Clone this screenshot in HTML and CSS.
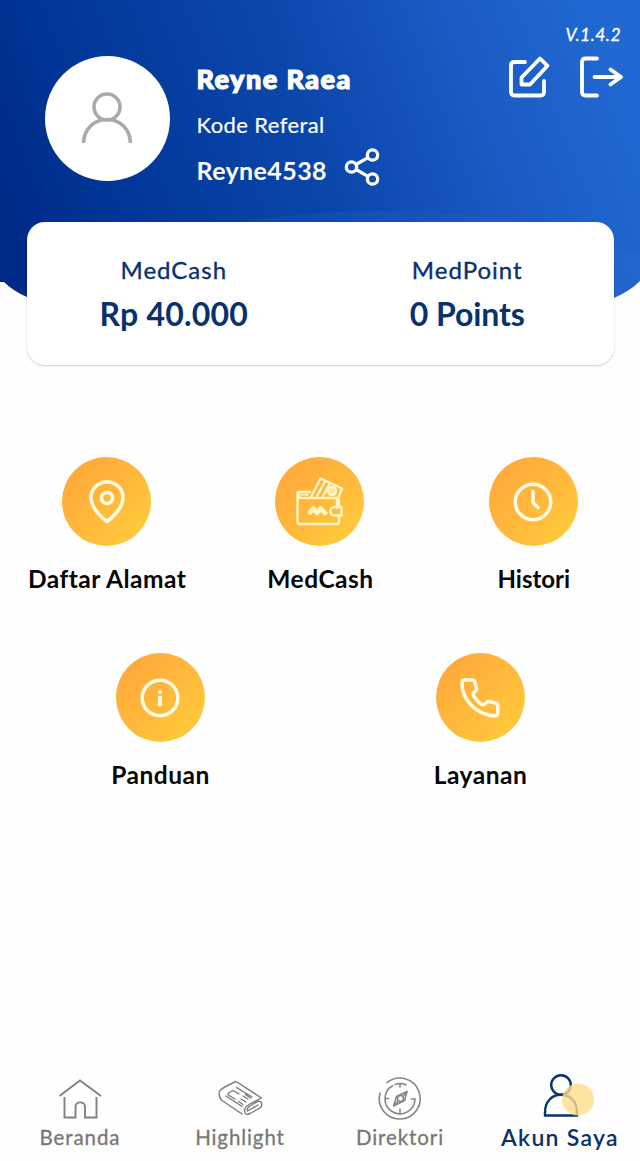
FILE: index.html
```html
<!DOCTYPE html>
<html lang="id">
<head>
<meta charset="utf-8">
<title>Akun Saya</title>
<link rel="stylesheet" href="styles.css">
</head>
<body>
<div class="app">
  <header class="header">
    <svg class="header-bg" viewBox="0 0 640 340" width="640" height="340" aria-hidden="true">
      <defs>
        <linearGradient id="blue" gradientUnits="userSpaceOnUse" x1="20" y1="240" x2="600" y2="20">
          <stop offset="0" stop-color="#002a88"/>
          <stop offset=".15" stop-color="#003596"/>
          <stop offset=".5" stop-color="#0b47ab"/>
          <stop offset=".78" stop-color="#1b5bc3"/>
          <stop offset="1" stop-color="#2168d2"/>
        </linearGradient>
        <clipPath id="shape"><path d="M0 0H640V281Q630 291 614 298Q540 330 320 330Q100 330 27 297Q13 291 4 282H0Z"/></clipPath>
      </defs>
      <g clip-path="url(#shape)">
        <rect width="640" height="340" fill="url(#blue)"/>
        <ellipse cx="380" cy="310" rx="310" ry="99" fill="#3a7be0" opacity=".13"/>
      </g>
    </svg>
    <div class="profile">
      <div class="avatar">
        <svg width="52" height="54" viewBox="0 0 52 54" fill="none" stroke="#a7abad" stroke-width="3.600"><circle cx="26" cy="16" r="13"/><path d="M2.500 52C3 38 13 28.500 26 28.500S49 38 49.500 52"/></svg>
      </div>
      <div class="identity">
        <div class="name">Reyne Raea</div>
        <div class="ref-label">Kode Referal</div>
        <div class="ref-row">
          <span class="ref-code">Reyne4538</span>
          <svg class="share" width="36" height="38" viewBox="0 0 36 38" fill="none" stroke="#fff" stroke-width="3.300"><circle cx="28.500" cy="7" r="5.200"/><circle cx="7.500" cy="19" r="5.200"/><circle cx="28.500" cy="31" r="5.200"/><path d="M12 16.500 24 9.600M12 21.500 24 28.400"/></svg>
        </div>
      </div>
      <div class="tools">
        <div class="version">V.1.4.2</div>
        <div class="actions">
          <svg width="44" height="44" viewBox="0 0 44 44" fill="none" stroke="#fff" stroke-width="3.800" stroke-linecap="round" stroke-linejoin="round"><path d="M18 7H7.500Q4 7 4 10.500V37Q4 40.500 7.500 40.500H33.500Q37 40.500 37 37V26"/><path d="M14.500 22.500 33 3.500 40.500 10.800 23 29.500H14.500Z"/></svg>
          <svg width="44" height="44" viewBox="0 0 44 44" fill="none" stroke="#fff" stroke-width="3.800" stroke-linecap="round" stroke-linejoin="round"><path d="M18 3.500H6.500Q3 3.500 3 7V37Q3 40.500 6.500 40.500H18M15.500 22H42M31.500 14.500 42 22 31.500 29.500"/></svg>
        </div>
      </div>
    </div>
    <section class="balance">
      <div class="balance-item cash"><div class="balance-label">MedCash</div><div class="balance-value">Rp 40.000</div></div>
      <div class="balance-item points"><div class="balance-label">MedPoint</div><div class="balance-value">0 Points</div></div>
    </section>
  </header>

  <main class="menu">
    <div class="menu-row">
      <div class="menu-item">
        <div class="disc"><svg width="50" height="50" viewBox="0 0 50 50" fill="none" stroke="#fffbe6" stroke-width="3.500" stroke-linejoin="round"><path d="M25 44.500C20 41 9 31 9 20.500A16 15.500 0 0 1 41 20.500C41 31 30 41 25 44.500Z"/><circle cx="25" cy="21" r="5.500"/></svg></div>
        <div class="menu-label daftar">Daftar Alamat</div>
      </div>
      <div class="menu-item">
        <div class="disc"><svg width="50" height="54" viewBox="0 0 50 54" fill="none" stroke="#fff5c2" stroke-width="2.400" stroke-linejoin="round" stroke-linecap="round"><path d="M42 33V23H4V17H15M4 17Q2.500 17 2.500 19V47Q2.500 49 4.500 49H42Q44 49 44 47V41M42 23Q44 23 44 25V31"/><path d="M16 22 25.500 3.500 47 13.500 43.500 22M22 21 30 6.500M28 21 34.500 9" /><path stroke-width="1.600" d="M6.500 19.800H13"/><circle cx="37" cy="16" r="4" fill="#ffe49a"/><path d="M39.500 32H46.500V40.500H39.500A4.200 4.200 0 0 1 39.500 32Z"/><path stroke-width="4.600" d="M15 37.500 18.500 33.500 22 38 25.500 33.500 30 38"/></svg></div>
        <div class="menu-label medcash">MedCash</div>
      </div>
      <div class="menu-item">
        <div class="disc"><svg width="50" height="50" viewBox="0 0 50 50" fill="none" stroke="#fffbe6" stroke-width="3.500" stroke-linecap="round" stroke-linejoin="round"><circle cx="25" cy="25" r="17.800"/><path d="M25 14.500V25.500L30 30.500"/></svg></div>
        <div class="menu-label histori">Histori</div>
      </div>
    </div>
    <div class="menu-row">
      <div class="menu-item">
        <div class="disc"><svg width="50" height="50" viewBox="0 0 50 50" fill="none" stroke="#fffbe6" stroke-width="3.500" stroke-linecap="round"><circle cx="25" cy="25" r="17.800"/><path stroke-width="4" d="M25 24.500V31.500"/><circle cx="25" cy="19" r="2.100" fill="#fffbe6" stroke="none"/></svg></div>
        <div class="menu-label panduan">Panduan</div>
      </div>
      <div class="menu-item">
        <div class="disc"><svg width="50" height="50" viewBox="0 0 50 50" fill="none" stroke="#fffbe6" stroke-width="3.500" stroke-linejoin="round"><path d="M9.500 7H17.500Q19.500 7 20 9.500L21.500 15Q22 17 20.500 18L18.800 19.500Q17.500 21 19 23.500Q22 28.500 26.500 31.200Q28.500 32.300 29.800 31L31.500 29.500Q33 28.300 35 28.700L40.500 30Q42.800 30.500 42.800 33V40Q42.800 43 39.500 43Q26 42 16.500 32.500T7 10Q7 7 9.500 7Z"/></svg></div>
        <div class="menu-label layanan">Layanan</div>
      </div>
    </div>
  </main>

  <nav class="tabs">
    <div class="tab">
      <svg width="50" height="50" viewBox="0 0 50 50" fill="none" stroke="#818181" stroke-width="1.900"><path d="M4.500 23 25 7.500 46 23M9.500 24V44.500H20.500V33.500A4.800 4.800 0 0 1 30 33.500V44.500H41.500V24"/></svg>
      <span class="tab-label beranda">Beranda</span>
    </div>
    <div class="tab">
      <svg width="50" height="50" viewBox="0 0 50 50" fill="none" stroke="#7b7b7b" stroke-width="1.400" stroke-linejoin="round" stroke-linecap="round"><path d="M27 41 7 27.500Q3 24 4.500 18.500Q6 15 21 8.500L46.500 25 34 31.500Q29.500 34 29.500 38Q30 43 35 40.500L45 35Q48 32 46 29Q44 27.500 41 29.500L34 33.500Q31.500 36 32.500 38L43 32"/><path d="M21.500 14.500 37 24M11 23 27 33.500M18 17.500 13.500 20Q12.500 21.500 14 22.500L20 26M18 17.500 24 21M28 23 33 26M26 26 31 29M23.500 28.500 28 31.500M30.500 21.500 35.500 25"/></svg>
      <span class="tab-label highlight">Highlight</span>
    </div>
    <div class="tab">
      <svg width="50" height="50" viewBox="0 0 50 50" fill="none" stroke="#858585" stroke-width="1.600" stroke-linecap="round"><path d="M12 9.500A20.500 20.500 0 1 1 5 20M20 11.500A15 15 0 0 1 31 11.800M17.500 12.800A15 15 0 1 0 40 26H36.500M25 10.500V14M25 40V36M10 25.500H13.500"/><path stroke-linejoin="round" d="M32 18.500 29.500 27.500 18.500 33 21.500 23.500Z"/><circle cx="25.500" cy="25.500" r="3"/><path d="M19 32.500 23 28M28 23 32 19"/></svg>
      <span class="tab-label direktori">Direktori</span>
    </div>
    <div class="tab active">
      <svg class="account" width="70" height="50" viewBox="0 0 70 50"><g fill="none" stroke="#07336f" stroke-width="2.400"><circle cx="36" cy="12" r="9.800"/><path d="M20 42.500V39.500C20 28.500 27 21.800 36 21.800S52 28.500 52 39.500V42.500Z"/></g><circle cx="53" cy="26.500" r="16" fill="#fedc89" opacity=".8"/></svg>
      <span class="tab-label akun">Akun Saya</span>
    </div>
  </nav>
</div>
</body>
</html>
```
FILE: styles.css
```css
* { box-sizing: border-box; }
body { margin: 0; background: #fefefe; font-family: Lato, "Liberation Sans", sans-serif; }
svg { display: block; flex: none; }
.app { width: 640px; height: 1161px; display: flex; flex-direction: column; overflow: hidden; }

.header { position: relative; height: 366px; flex: none; padding: 0 26px 0 27px; }
.header-bg { position: absolute; top: 0; left: 0; }
.profile { position: relative; height: 222px; display: flex; align-items: flex-start; color: #fff; }
.avatar { width: 125px; height: 125px; margin: 55.5px 0 0 17.5px; border-radius: 50%; background: #fff; display: flex; align-items: center; justify-content: center; flex: none; }
.identity { margin-left: 27px; padding-top: 60px; white-space: nowrap; flex: 1; }
.name { font-size: 27px; font-weight: 900; line-height: 38px; letter-spacing: 1.45px; -webkit-text-stroke: 1.2px #fff; }
.ref-label { font-size: 22px; line-height: 36px; margin-top: 9px; letter-spacing: .4px; -webkit-text-stroke: .2px #fff; }
.ref-row { display: flex; align-items: center; height: 40px; margin-top: 4px; }
.ref-code { font-size: 25px; font-weight: 700; line-height: 40px; padding-top: 6px; width: 147px; letter-spacing: .4px; }
.tools { width: 118px; flex: none; padding-top: 24px; margin-right: -9px; }
.version { font-size: 17.5px; font-style: italic; line-height: 22px; text-align: right; padding-right: 2px; letter-spacing: .45px; -webkit-text-stroke: .3px #fff; }
.actions { display: flex; justify-content: space-between; margin-top: 9px; padding-left: 2px; }

.balance { position: relative; height: 143px; display: flex; border-radius: 18px; background: #fff; box-shadow: 0 1px 2px rgba(0, 0, 0, .2); color: #08316d; text-align: center; }
.balance-item { width: 294px; padding-top: 32px; }
.balance-label { font-size: 24px; line-height: 32px; letter-spacing: 1px; -webkit-text-stroke: .35px #08316d; }
.balance-value { font-size: 32px; font-weight: 700; line-height: 42px; margin-top: 7px; letter-spacing: .2px; }
.points .balance-value { letter-spacing: -.1px; }

.menu { padding-top: 91px; flex: 1; }
.menu-row { display: flex; height: 196px; }
.menu-item { flex: 1; display: flex; flex-direction: column; align-items: center; }
.disc { width: 89px; height: 89px; border-radius: 50%; background: linear-gradient(135deg, #ffa93c 12%, #ffb83b 50%, #ffcb3b 90%); display: flex; align-items: center; justify-content: center; }
.menu-label { font-size: 24.5px; font-weight: 700; line-height: 32px; margin-top: 17px; padding-left: 1px; color: #070707; white-space: nowrap; letter-spacing: .5px; }
.histori { letter-spacing: 0; font-size: 24px; }

.tabs { display: flex; height: 91px; flex: none; }
.tab { flex: 1; display: flex; flex-direction: column; align-items: center; padding-top: 3px; color: #777; }
.tab-label { font-size: 20.5px; line-height: 26px; margin-top: 1px; letter-spacing: .9px; white-space: nowrap; -webkit-text-stroke: .3px currentColor; }
.active { color: #08316d; }
.akun { font-size: 23px; font-weight: 600; letter-spacing: 1.3px; margin-top: 1px; -webkit-text-stroke: 0; }
```
